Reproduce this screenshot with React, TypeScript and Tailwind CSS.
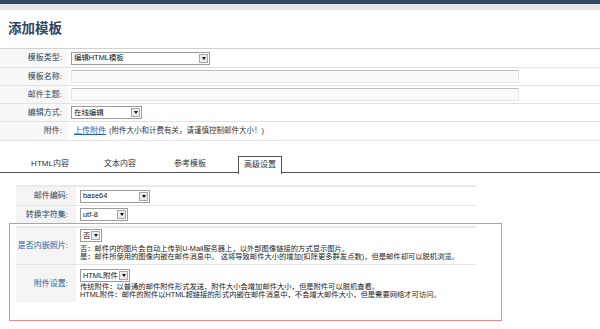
import React from 'react'

/**
 * 添加模板 - mail template editor form (advanced settings tab)
 */

const Caret = () => (
  <span className="m-[1px] flex h-[9px] w-[9px] shrink-0 items-center justify-center border border-[#a8a8a8] bg-[#ececec]">
    <span className="h-0 w-0 border-x-[2.5px] border-t-[3px] border-x-transparent border-t-[#111]" />
  </span>
)

function Select({ value, width }: { value: string; width: string }) {
  return (
    <div className={`flex h-[13px] items-center border border-[#9c9c9c] bg-white ${width}`}>
      <span className="flex-1 overflow-hidden whitespace-nowrap pl-[2px] text-[7.4px] leading-none text-[#111]">{value}</span>
      <Caret />
    </div>
  )
}

function Input() {
  return <div className="h-[13px] w-[448px] border border-[#e6e6e6] border-t-[#bdbdbd] bg-[#fafafa]" />
}

function Row({ label, height, children }: { label: string; height: string; children: React.ReactNode }) {
  return (
    <div className={`flex border-b border-[#e2e2e2] ${height}`}>
      <div className="flex w-[68px] items-center justify-end bg-[#f7f7f7] pr-[6px] text-[8px] text-[#2a4560]">
        {label}
      </div>
      <div className="flex flex-1 items-center pl-[3px]">{children}</div>
    </div>
  )
}

export default function App() {
  const tabs = ['HTML内容', '文本内容', '参考模板', '高级设置']

  return (
    <div className="h-[329px] w-[600px] overflow-hidden bg-white font-['Liberation_Sans','Noto_Sans_CJK_SC',sans-serif]">
      {/* Header bars */}
      <div className="h-[4px] bg-[#30485f]" />
      <div className="h-[6px] bg-[#e6e6e6]" />
      <div className="flex h-[38px] items-center pl-[8px]">
        <h1 className="text-[13.5px] font-bold text-[#2c4863]">添加模板</h1>
      </div>

      {/* Main form */}
      <div className="border-t border-[#d0d0d0]">
        <Row label="模板类型:" height="h-[19px]">
          <Select value="编辑HTML模板" width="w-[139px]" />
        </Row>
        <Row label="模板名称:" height="h-[18px]">
          <Input />
        </Row>
        <Row label="邮件主题:" height="h-[18px]">
          <Input />
        </Row>
        <Row label="编辑方式:" height="h-[18px]">
          <Select value="在线编辑" width="w-[71px]" />
        </Row>
        <Row label="附件:" height="h-[19px]">
          <span className="ml-[3px] text-[8px] text-[#1d64b5] underline">上传附件</span>
          <span className="ml-[3px] text-[7.5px] text-[#333]">(附件大小和计费有关，请谨慎控制邮件大小！)</span>
        </Row>
      </div>

      {/* Tabs */}
      <div className="mt-[14px] flex h-[18px] items-end gap-[26px] border-b-[1.5px] border-[#555] pl-[28px]">
        {tabs.map((t, i) =>
          i === 3 ? (
            <div
              key={t}
              className="-mb-[1.5px] flex h-[18px] w-[44px] items-center justify-center border border-b-0 border-[#555] bg-white text-[8px] text-[#333]"
            >
              {t}
            </div>
          ) : (
            <div key={t} className="flex h-[17px] w-[44px] items-center justify-center text-[8px] text-[#333]">
              {t}
            </div>
          ),
        )}
      </div>

      {/* Advanced settings */}
      <div className="mt-[12px] ml-[16px] w-[460px] border-t-2 border-[#e9e9e9]">
        <div className="flex h-[19px] border-b border-[#e4e4e4]">
          <div className="flex w-[60px] items-center justify-end bg-[#f4f4f4] pr-[8px] text-[8px] text-[#2a4560]">
            邮件编码:
          </div>
          <div className="ml-[2px] flex items-center pl-[2px]">
            <Select value="base64" width="w-[70px]" />
          </div>
        </div>
        <div className="flex h-[17px]">
          <div className="flex w-[60px] items-center justify-end bg-[#f4f4f4] pr-[8px] text-[8px] text-[#2a4560]">
            转换字符集:
          </div>
          <div className="ml-[2px] flex items-center pl-[2px]">
            <Select value="utf-8" width="w-[48px]" />
          </div>
        </div>
      </div>

      <div className="ml-[9px] h-[98px] w-[493px] border border-[#e98b8b] pt-[2px] pl-[6px]">
        <div className="w-[460px] border-t-2 border-[#e9e9e9]">
          <div className="flex h-[37px] border-b border-[#e4e4e4]">
            <div className="flex w-[60px] shrink-0 items-center justify-end bg-[#f4f4f4] pr-[8px] text-[8px] text-[#2b62a3]">
              是否内嵌照片:
            </div>
            <div className="ml-[2px] flex flex-col pt-[1px] pl-[2px]">
              <Select value="否" width="w-[22px]" />
              <p className="mt-[3px] whitespace-nowrap text-[7.3px] leading-[8px] text-[#222]">
                否：邮件内的图片会自动上传到U-Mail服务器上，以外部图像链接的方式显示图片。
              </p>
              <p className="whitespace-nowrap text-[7.3px] leading-[8px] text-[#222]">
                是：邮件所使用的图像内嵌在邮件消息中。 这将导致邮件大小的增加(扣除更多群发点数)，但是邮件却可以脱机浏览。
              </p>
            </div>
          </div>
          <div className="flex h-[37px]">
            <div className="flex w-[60px] shrink-0 items-center justify-end bg-[#f4f4f4] pr-[8px] text-[8px] text-[#2b62a3]">
              附件设置:
            </div>
            <div className="ml-[2px] flex flex-col pt-[4px] pl-[2px]">
              <Select value="HTML附件" width="w-[50px]" />
              <p className="mt-[1px] whitespace-nowrap text-[7.3px] leading-[8px] text-[#222]">
                传统附件：以普通的邮件附件形式发送，附件大小会增加邮件大小，但是附件可以脱机查看。
              </p>
              <p className="whitespace-nowrap text-[7.3px] leading-[8px] text-[#222]">
                HTML附件：邮件的附件以HTML超链接的形式内嵌在邮件消息中，不会增大邮件大小，但是需要网络才可访问。
              </p>
            </div>
          </div>
        </div>
      </div>
    </div>
  )
}
